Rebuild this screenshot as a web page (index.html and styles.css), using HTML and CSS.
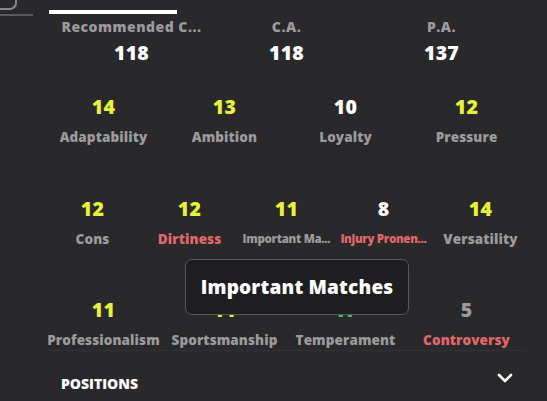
FILE: index.html
```html
<!DOCTYPE html>
<html>
<head>
<meta charset="utf-8">
<link rel="stylesheet" href="styles.css">
</head>
<body>
<div class="page">
  <aside class="sidebar">
    <div class="sb-btn"></div>
    <div class="sb-line"></div>
  </aside>
  <main class="main">
    <div class="tab-bar"></div>
    <div class="row row-3">
      <div class="cell top"><div class="label">Recommended C...</div><div class="val white">118</div></div>
      <div class="cell top"><div class="label">C.A.</div><div class="val white">118</div></div>
      <div class="cell top"><div class="label">P.A.</div><div class="val white">137</div></div>
    </div>
    <div class="row row-4 r2">
      <div class="cell"><div class="val yellow">14</div><div class="label">Adaptability</div></div>
      <div class="cell"><div class="val yellow">13</div><div class="label">Ambition</div></div>
      <div class="cell"><div class="val white">10</div><div class="label">Loyalty</div></div>
      <div class="cell"><div class="val yellow">12</div><div class="label">Pressure</div></div>
    </div>
    <div class="row row-5 r3">
      <div class="cell"><div class="val yellow">12</div><div class="label">Cons</div></div>
      <div class="cell"><div class="val yellow">12</div><div class="label red">Dirtiness</div></div>
      <div class="cell"><div class="val yellow">11</div><div class="label small">Important Ma...</div></div>
      <div class="cell"><div class="val white">8</div><div class="label small red">Injury Pronen...</div></div>
      <div class="cell"><div class="val yellow">14</div><div class="label">Versatility</div></div>
    </div>
    <div class="row row-4 r4">
      <div class="cell"><div class="val yellow">11</div><div class="label">Professionalism</div></div>
      <div class="cell"><div class="val yellow">11</div><div class="label">Sportsmanship</div></div>
      <div class="cell"><div class="val green">17</div><div class="label">Temperament</div></div>
      <div class="cell"><div class="val grey">5</div><div class="label red">Controversy</div></div>
    </div>
    <div class="divider"></div>
    <div class="section">
      <span class="section-title">POSITIONS</span>
      <svg class="chev" width="16" height="10" viewBox="0 0 16 10"><path d="M2 2 L8 8 L14 2" fill="none" stroke="#fff" stroke-width="2.6" stroke-linecap="round" stroke-linejoin="round"/></svg>
    </div>
  </main>
  <div class="tooltip">Important Matches</div>
</div>
</body>
</html>
```
FILE: styles.css
```css
html, body {
  margin: 0;
  padding: 0;
  background: #29282a;
  width: 547px;
  height: 401px;
  overflow: hidden;
  font-family: "Open Sans", "Lato", sans-serif;
  font-weight: 800;
}
.page {
  position: relative;
  display: flex;
  height: 401px;
}
.sidebar {
  width: 33px;
  border-right: 1px solid #2c2b2d;
  flex: none;
}
.sb-btn {
  width: 15px;
  height: 8px;
  border-right: 2px solid #8a898b;
  border-bottom: 2px solid #8a898b;
  border-bottom-right-radius: 7px;
}
.sb-line {
  margin-top: 4px;
  height: 2px;
  background: #5a595b;
}
.main {
  flex: 1;
  display: flex;
  flex-direction: column;
}
.tab-bar {
  margin: 10px 0 0 15px;
  width: 128px;
  height: 4px;
  background: #fff;
}
.row {
  display: grid;
}
.row-3 {
  grid-template-columns: repeat(3, 155px);
  padding-left: 20px;
  margin-top: 4px;
}
.row-4 {
  grid-template-columns: repeat(4, 121px);
  padding-left: 9px;
}
.row-5 {
  grid-template-columns: repeat(5, 97px);
  padding-left: 10px;
}
.r2 { margin-top: 32px; }
.r3 { margin-top: 52px; }
.r4 { margin-top: 51px; }
.cell {
  display: flex;
  flex-direction: column;
  align-items: center;
  min-width: 0;
}
.val {
  font-size: 19.5px;
  line-height: 22px;
  letter-spacing: 0.2px;
}
.label {
  font-size: 13.5px;
  line-height: 18px;
  color: #9b9a9c;
  white-space: nowrap;
  margin-top: 10px;
  letter-spacing: 0.1px;
}
.top .label {
  margin-top: 0;
  font-size: 14px;
  letter-spacing: 0.5px;
}
.top .val { margin-top: 6px; }
.label.small {
  font-size: 11.5px;
  letter-spacing: -0.3px;
}
.white { color: #ffffff; }
.yellow { color: #e7f23a; }
.green { color: #2ed25c; }
.grey { color: #9b9a9c; }
.label.red, .red { color: #e0686c; }
.divider {
  margin: 1px 22px 0 15px;
  height: 1px;
  background: #323133;
}
.section {
  display: flex;
  align-items: center;
  justify-content: space-between;
  padding: 23px 34px 0 27px;
}
.section-title {
  color: #fff;
  font-size: 14px;
}
.chev { margin-top: -12px; }
.tooltip {
  position: absolute;
  left: 185px;
  top: 259px;
  width: 224px;
  height: 56px;
  box-sizing: border-box;
  border: 1px solid #58575a;
  border-radius: 7px;
  background: #1e1d1f;
  color: #fff;
  font-size: 19px;
  letter-spacing: 0.2px;
  display: flex;
  align-items: center;
  justify-content: center;
}
```
